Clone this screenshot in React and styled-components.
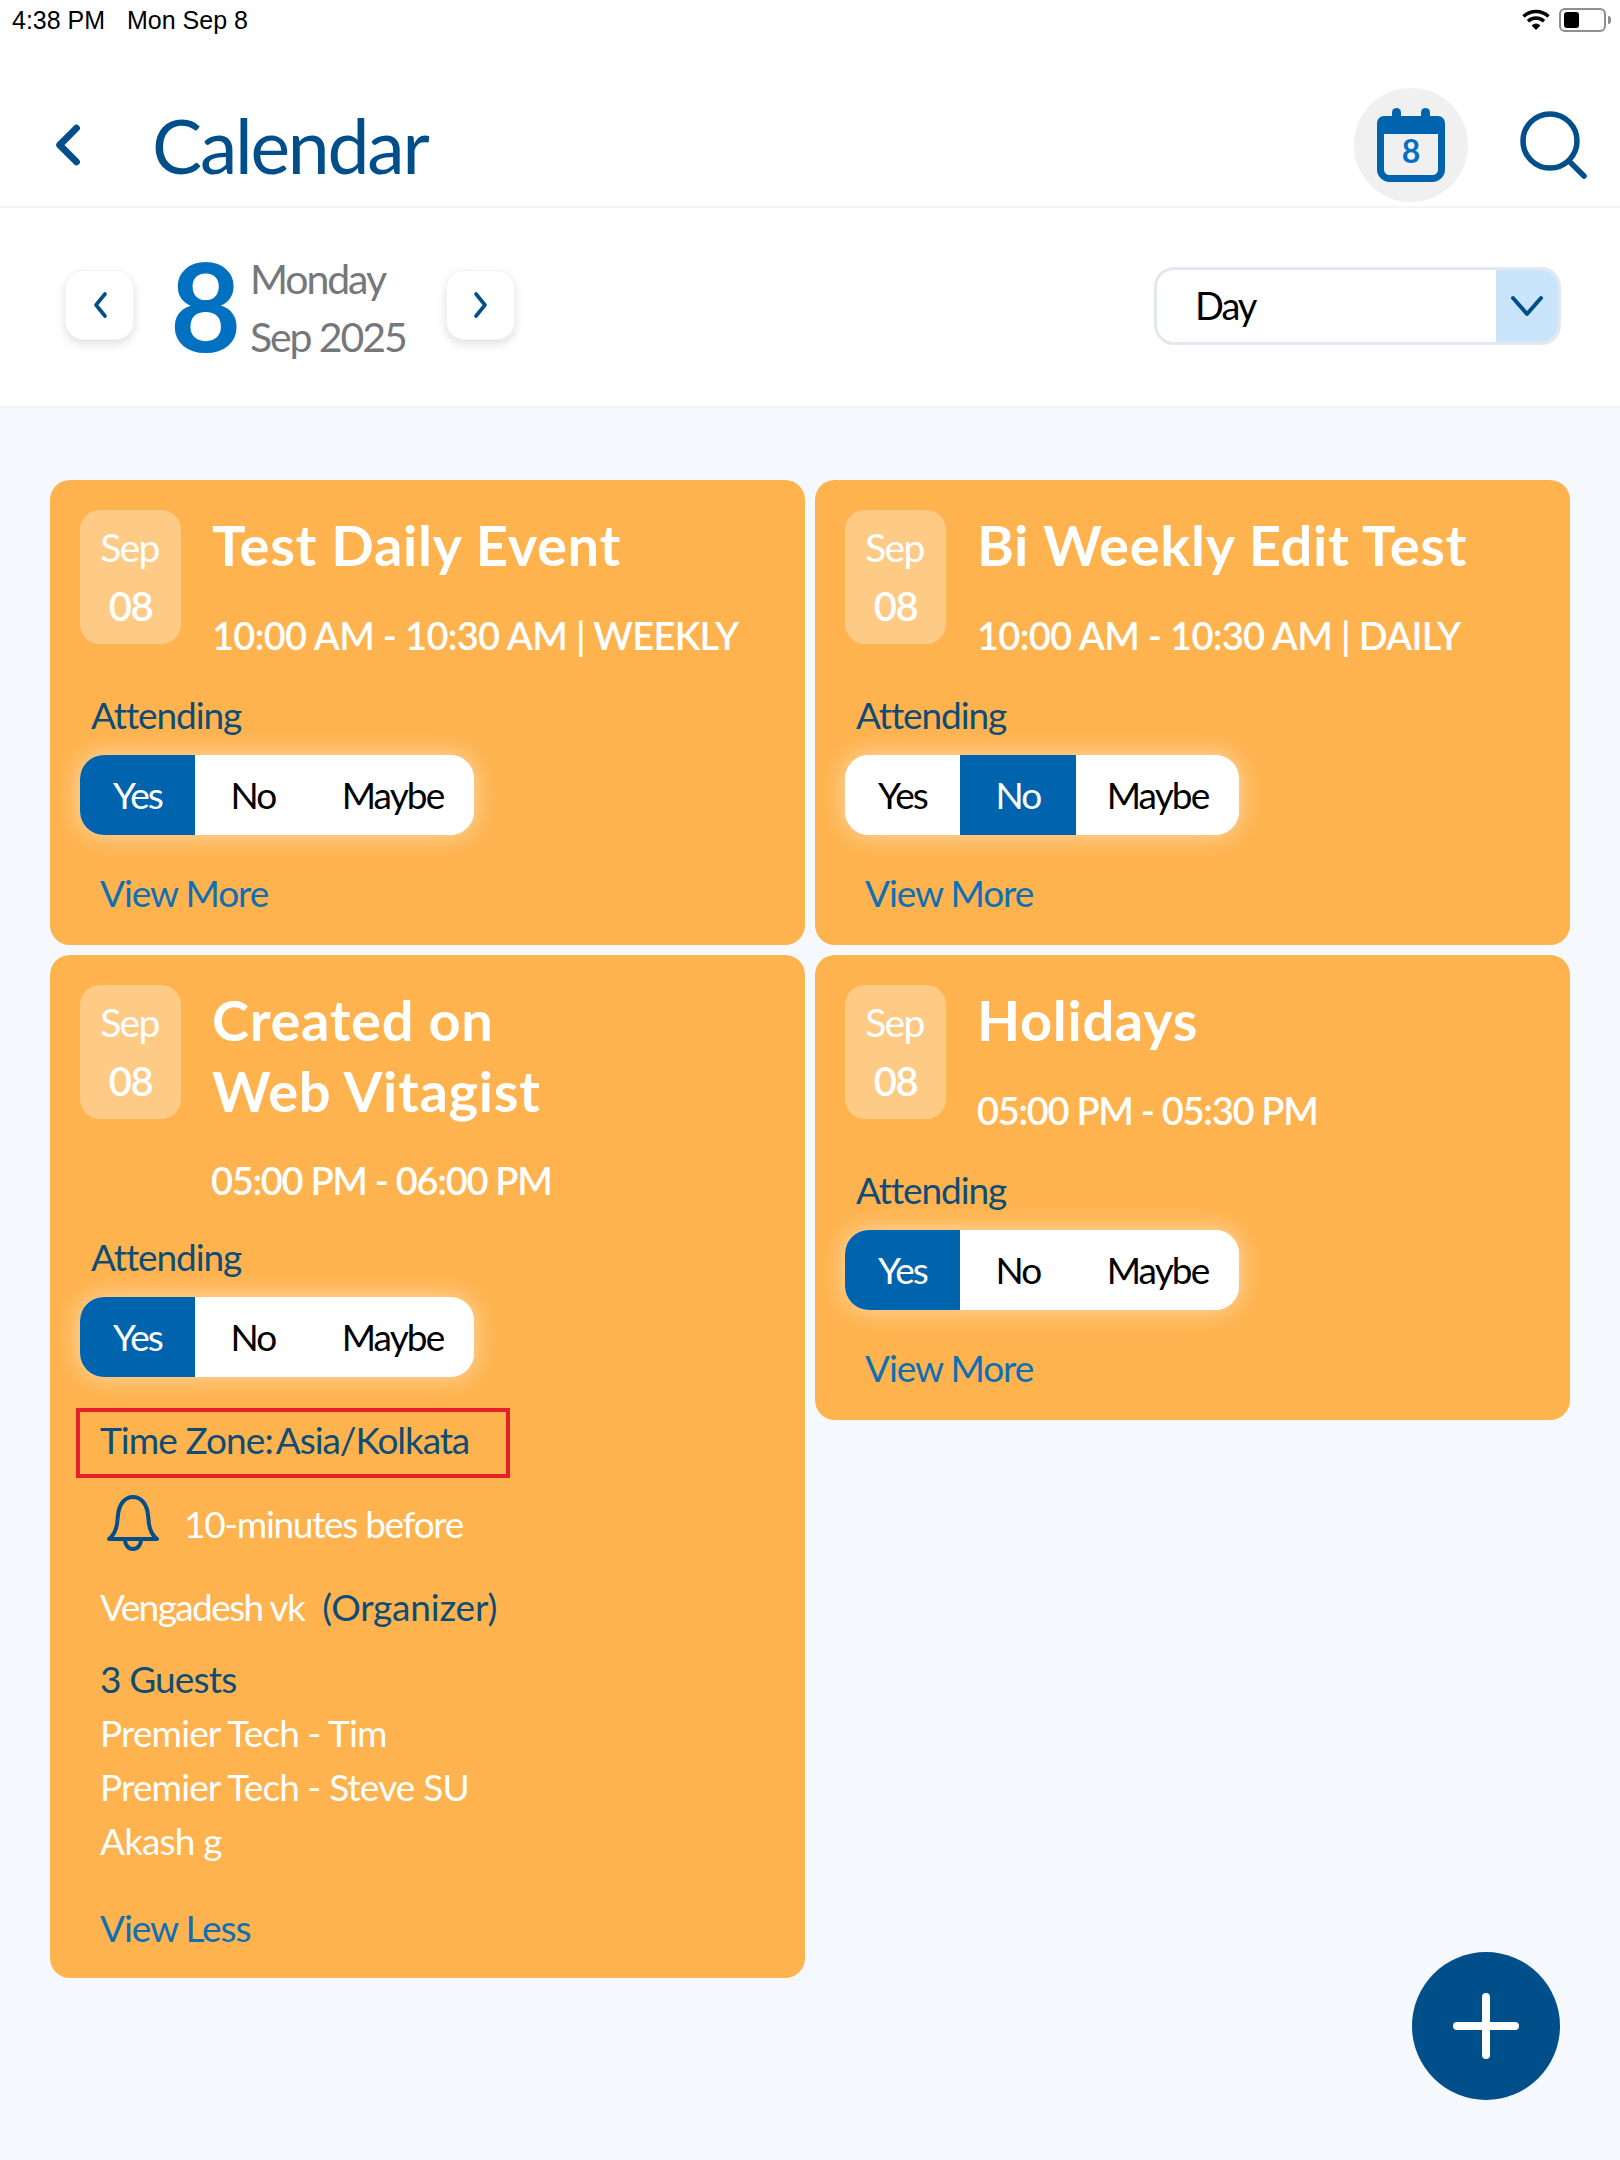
import React from 'react';
import styled, { createGlobalStyle } from 'styled-components';

const Global = createGlobalStyle`
  html, body { margin: 0; padding: 0; background: #fff; }
  * { box-sizing: border-box; }
  body { font-family: Lato, "Noto Sans", sans-serif; }
`;
const Page = styled.div`position: relative; width: 1620px; height: 2160px; background: #f5f8fd; overflow: hidden;`;
const StatusBar = styled.div`height: 46px; padding: 0 14px 6px 12px; background: #fff; display: flex; align-items: center; font: 400 25px "Liberation Sans", sans-serif; color: #000;`;
const StatusTime = styled.span`width: 115px;`;
const StatusRight = styled.div`margin-left: auto; display: flex; align-items: center; gap: 9px;`;
const Battery = styled.div`position: relative; width: 47px; height: 24px; border: 2px solid #8e8e8e; border-radius: 6px; padding: 2px 3px;`;
const BatteryFill = styled.div`width: 15px; height: 100%; background: #000; border-radius: 3px;`;
const BatteryTip = styled.div`position: absolute; right: -7px; top: 6px; width: 3px; height: 8px; background: #8e8e8e; border-radius: 0 3px 3px 0;`;
const Header = styled.header`height: 162px; padding: 38px 32px 0 54px; background: #fff; border-bottom: 2px solid #f3f5f8; display: flex; align-items: center;`;
const Title = styled.h1`margin: 0 0 0 72px; font: 400 75px Lato, sans-serif; letter-spacing: -2.2px; color: #004f8b;`;
const HeaderIcons = styled.div`margin-left: auto; display: flex; align-items: center; gap: 52px;`;
const CalCircle = styled.div`width: 114px; height: 114px; border-radius: 50%; background: #f0f0f0; display: flex; align-items: center; justify-content: center;`;
const DateBar = styled.div`height: 200px; padding: 0 59px 0 65px; background: #fff; border-bottom: 2px solid #f0f2f6; display: flex; align-items: center;`;
const NavBtn = styled.div`width: 69px; height: 70px; border-radius: 18px; background: #fff; box-shadow: 0 4px 10px rgba(60,60,80,.16); border: 1px solid #f3f3f5; display: flex; align-items: center; justify-content: center; margin-top: -5px;`;
const BigDay = styled.div`margin: -5px 0 0 36px; font: 700 123px/1 Lato, sans-serif; color: #0070c0; width: 80px;`;
const DateText = styled.div`margin: 2px 2px 0 0; display: flex; flex-direction: column; gap: 16px; font: 400 41px/42px Lato, sans-serif; letter-spacing: -2.1px; color: #76777b; width: 194px;`;
const Select = styled.div`margin: -3px 0 0 auto; width: 407px; height: 78px; border: 3px solid #e3e7ef; border-radius: 20px; display: flex; overflow: hidden;`;
const SelectValue = styled.div`flex: 1; padding: 0 0 2px 38px; display: flex; align-items: center; font: 400 38px Lato, sans-serif; letter-spacing: -2px; color: #000;`;
const SelectArrow = styled.div`width: 62px; background: #c9e4fb; display: flex; align-items: center; justify-content: center;`;
const Columns = styled.main`padding: 72px 50px 0; display: flex; gap: 10px; align-items: flex-start;`;
const Column = styled.div`width: 755px; display: flex; flex-direction: column; gap: 10px;`;
const Card = styled.article`background: #feb34f; border-radius: 20px; padding: 30px 30px ${p => p.$bottom}px; color: #fff;`;
const Top = styled.div`display: flex; gap: 31px;`;
const Chip = styled.div`flex: none; width: 101px; height: 134px; border-radius: 20px; background: #fecb86; display: flex; flex-direction: column; align-items: center; padding: 15px 2px 0 0; gap: 14px;`;
const ChipMonth = styled.span`font: 400 39px/44px Lato, sans-serif; letter-spacing: -1.6px;`;
const ChipDay = styled.span`font: 600 40px/46px Lato, sans-serif; letter-spacing: -1.4px; margin-left: 2px;`;
const Info = styled.div`min-width: 0; margin-top: -1px;`;
const EventTitle = styled.h2`margin: 0; font: 700 56px/71px Lato, sans-serif; letter-spacing: .7px; white-space: pre-line;`;
const Time = styled.div`margin-top: ${p => p.$top}px; font: 600 38px/46px Lato, sans-serif; letter-spacing: ${p => p.$spacing}px; margin-left: ${p => p.$nudge || 0}px; white-space: nowrap;`;
const Attending = styled.div`margin: ${p => p.$gap}px 0 0 11px; font: 400 37px/46px Lato, sans-serif; letter-spacing: -1.1px; color: #0f4c75;`;
const Toggle = styled.div`margin-top: 17px; width: 394px; height: 80px; border-radius: 24px; background: #fff; display: flex; overflow: hidden; box-shadow: 0 0 24px rgba(255,255,255,.55);`;
const Seg = styled.div`flex: ${p => p.$grow}; display: flex; align-items: center; justify-content: center; padding-bottom: 2px; font: 400 37px Lato, sans-serif; letter-spacing: -1.9px; background: ${p => p.$on ? '#0063ae' : '#fff'}; color: ${p => p.$on ? '#fff' : '#000'};`;
const ViewLink = styled.div`margin: ${p => p.$top || 35}px 0 0 20px; font: 400 37px/46px Lato, sans-serif; letter-spacing: -1.1px; color: #0f6fb5;`;
const Zone = styled.div`margin: 31px 0 0 -4px; width: 434px; height: 70px; border: 4px solid #e4202b; padding: 0 0 7px 20px; display: flex; align-items: center; font: 400 37px Lato, sans-serif; letter-spacing: -.9px; color: #0f4c75; white-space: pre;`;
const ZoneValue = styled.span`margin-left: 3px; letter-spacing: -1.1px;`;
const Reminder = styled.div`margin: 15px 0 0 26px; height: 60px; display: flex; align-items: center; gap: 24px; font: 400 37px Lato, sans-serif; letter-spacing: -1.3px;`;
const Organizer = styled.div`margin: 31px 0 0 20px; font: 400 37px/46px Lato, sans-serif; letter-spacing: -1.6px;`;
const Role = styled.span`margin-left: 18px; letter-spacing: -.2px; color: #0f4c75;`;
const Guests = styled.div`margin: 22px 0 0 20px; font: 400 37px/54px Lato, sans-serif; letter-spacing: -.85px;`;
const GuestCount = styled.div`color: #0f4c75;`;
const Fab = styled.div`position: absolute; left: 1412px; top: 1952px; width: 148px; height: 148px; border-radius: 50%; background: #004f8b; display: flex; align-items: center; justify-content: center;`;

const Chev = ({ d, w = 24, h = 40, sw = 6, vb = '0 0 24 40', c = '#004f8b' }) => (
  <svg width={w} height={h} viewBox={vb} fill="none" stroke={c} strokeWidth={sw} strokeLinecap="round" strokeLinejoin="round"><path d={d} /></svg>
);

const Rsvp = ({ on }) => (
  <Toggle>
    <Seg $grow="0 0 115px" $on={on === 'Yes'}>Yes</Seg>
    <Seg $grow="0 0 116px" $on={on === 'No'}>No</Seg>
    <Seg $grow="1" $on={false}>Maybe</Seg>
  </Toggle>
);

const EventCard = ({ title, time, spacing = -1.3, on, gap = 34, children, more = true, timeOut, bottom = 29 }) => (
  <Card $bottom={bottom}>
    <Top>
      <Chip><ChipMonth>Sep</ChipMonth><ChipDay>08</ChipDay></Chip>
      <Info>
        <EventTitle>{title}</EventTitle>
        {!timeOut && <Time $top={32} $spacing={spacing}>{time}</Time>}
      </Info>
    </Top>
    {timeOut && <Time $top={31} $nudge={131} $spacing={spacing}>{time}</Time>}
    <Attending $gap={gap}>Attending</Attending>
    <Rsvp on={on} />
    {more ? <ViewLink>View More</ViewLink> : children}
  </Card>
);

export default function App() {
  return (
    <Page>
      <Global />
      <StatusBar>
        <StatusTime>4:38 PM</StatusTime>
        <span>Mon Sep 8</span>
        <StatusRight>
          <svg width="28" height="22" viewBox="0 0 28 22" fill="none" stroke="#000" strokeWidth="3.4" strokeLinecap="butt">
            <path d="M1.5 7.5a18 18 0 0 1 25 0" /><path d="M6 12.2a11.5 11.5 0 0 1 16 0" /><path d="M14 21l-4.4-4.6a6.2 6.2 0 0 1 8.8 0z" fill="#000" stroke="none" />
          </svg>
          <Battery><BatteryFill /><BatteryTip /></Battery>
        </StatusRight>
      </StatusBar>
      <Header>
        <Chev d="M21 4L5 20l16 16" w={26} h={42} sw={6.5} />
        <Title>Calendar</Title>
        <HeaderIcons>
          <CalCircle>
            <svg width="68" height="74" viewBox="0 0 68 74">
              <rect x="15" y="0" width="9" height="14" rx="4.5" fill="#0063ae" />
              <rect x="44" y="0" width="9" height="14" rx="4.5" fill="#0063ae" />
              <rect x="3.5" y="11.5" width="61" height="59" rx="9" fill="#f0f0f0" stroke="#0063ae" strokeWidth="7" />
              <rect x="0" y="8" width="68" height="18" rx="7" fill="#0063ae" />
              <text x="34" y="55" textAnchor="middle" fontFamily="Lato, sans-serif" fontWeight="700" fontSize="32" fill="#0070c0">8</text>
            </svg>
          </CalCircle>
          <svg width="68" height="68" viewBox="0 0 68 68" fill="none" stroke="#004f8b" strokeWidth="5.5" strokeLinecap="round">
            <circle cx="30" cy="30" r="27" /><path d="M49 50l15 15" />
          </svg>
        </HeaderIcons>
      </Header>
      <DateBar>
        <NavBtn><Chev d="M13 3L4 14l9 11" w={16} h={28} vb="0 0 16 28" sw={3.6} /></NavBtn>
        <BigDay>8</BigDay>
        <DateText><span>Monday</span><span>Sep 2025</span></DateText>
        <NavBtn><Chev d="M3 3l9 11-9 11" w={16} h={28} vb="0 0 16 28" sw={3.6} /></NavBtn>
        <Select>
          <SelectValue>Day</SelectValue>
          <SelectArrow><Chev d="M3 3l14 16L31 3" w={34} h={22} vb="0 0 34 22" sw={4} /></SelectArrow>
        </Select>
      </DateBar>
      <Columns>
        <Column>
          <EventCard title="Test Daily Event" time="10:00 AM - 10:30 AM | WEEKLY" spacing={-.7} on="Yes" />
          <EventCard title={'Created on\nWeb Vitagist'} time="05:00 PM - 06:00 PM" on="Yes" more={false} timeOut gap={31} bottom={27}>
            <Zone><span>Time Zone:</span><ZoneValue>Asia/Kolkata</ZoneValue></Zone>
            <Reminder>
              <svg width="54" height="58" viewBox="0 0 54 58" fill="none" stroke="#004f8b" strokeWidth="4" strokeLinejoin="round" strokeLinecap="round">
                <path d="M3 45c5-4 7-8 8-15l1-9C13 10 19 3 27 3s14 7 15 18l1 9c1 7 3 11 8 15z" /><path d="M19 46a8 9 0 0 0 16 0" />
              </svg>
              <span>10-minutes before</span>
            </Reminder>
            <Organizer>Vengadesh vk<Role>(Organizer)</Role></Organizer>
            <Guests>
              <GuestCount>3 Guests</GuestCount>
              <div>Premier Tech - Tim</div>
              <div>Premier Tech - Steve SU</div>
              <div>Akash g</div>
            </Guests>
            <ViewLink $top={37}>View Less</ViewLink>
          </EventCard>
        </Column>
        <Column>
          <EventCard title="Bi Weekly Edit Test" time="10:00 AM - 10:30 AM | DAILY" spacing={-.7} on="No" />
          <EventCard title="Holidays" time="05:00 PM - 05:30 PM" on="Yes" />
        </Column>
      </Columns>
      <Fab>
        <svg width="66" height="66" viewBox="0 0 66 66" stroke="#fff" strokeWidth="8" strokeLinecap="round"><path d="M33 4v58M4 33h58" /></svg>
      </Fab>
    </Page>
  );
}
